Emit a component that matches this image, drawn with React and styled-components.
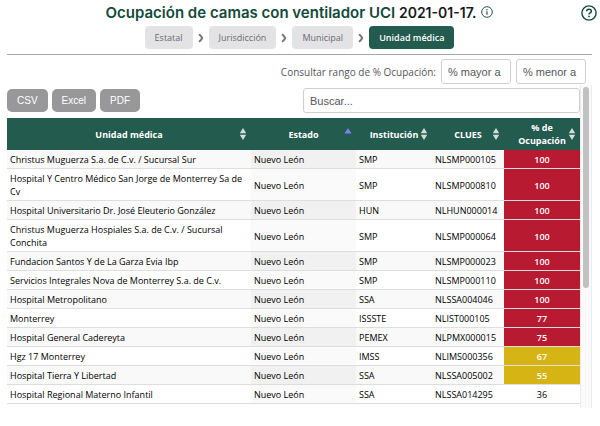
import React, { useState } from "react";
import styled, { createGlobalStyle } from "styled-components";

const Colours = {
  green: "#235b4e",
  darkgreen: "#12493b",
  red: "#b81a31",
  yellow: "#d6b414",
  gray: "#98989a",
  lightgray: "#e3e3e5",
  border: "#cfcfcf",
  text: "#55565a",
};

const GlobalStyle = createGlobalStyle`
  * {
    box-sizing: border-box;
  }
  body {
    margin: 0;
    background: #fff;
    font-family: "Open Sans", sans-serif;
    font-size: 9px;
    color: #000;
  }
`;

const PageContainer = styled.div`
  height: 100vh;
  padding: 0 8px 18px 7px;
  display: flex;
  flex-direction: column;
`;

const Header = styled.header`
  display: grid;
  grid-template-columns: 16px 1fr 16px;
  align-items: center;
  height: 26px;
  margin: 0 -5px;
  flex-shrink: 0;
`;

const Title = styled.h1`
  grid-column: 2;
  margin: 0;
  display: flex;
  justify-content: center;
  align-items: center;
  font-family: Inter, sans-serif;
  font-size: 15px;
  font-weight: 600;
  line-height: 24px;
  color: ${Colours.darkgreen};

  strong {
    font-size: 14px;
    font-weight: 600;
    color: #161a1d;
  }
`;

const IconButton = styled.button`
  display: flex;
  padding: 0;
  margin: ${(props) => props.$margin || "0"};
  border: none;
  background: none;
  color: ${Colours.darkgreen};
  cursor: pointer;
`;

const Breadcrumb = styled.nav`
  display: flex;
  justify-content: center;
  align-items: center;
  gap: 5px;
  padding-bottom: 5px;
  border-bottom: 1px solid #a6a6a6;
  flex-shrink: 0;
`;

const Crumb = styled.button`
  height: 23px;
  padding: 0 10px;
  border: none;
  border-radius: 4px;
  font-family: inherit;
  font-size: 9px;
  font-weight: ${(props) => (props.$active ? 600 : 400)};
  color: ${(props) => (props.$active ? "#fff" : "#6a6b6f")};
  background: ${(props) => (props.$active ? Colours.green : Colours.lightgray)};
  cursor: pointer;
`;

const RangeRow = styled.div`
  display: flex;
  justify-content: flex-end;
  align-items: center;
  gap: 5px;
  padding: 4px 6px 1px 0;
  flex-shrink: 0;
`;

const RangeLabel = styled.label`
  font-size: 10px;
  color: ${Colours.text};
`;

const TextInput = styled.input`
  width: ${(props) => props.$width};
  height: 25px;
  padding: 0 6px;
  border: 1px solid ${Colours.border};
  border-radius: 3px;
  font-family: "Liberation Sans", Arial, sans-serif;
  font-size: 11px;
  color: ${Colours.text};

  &::placeholder {
    color: ${Colours.text};
  }
`;

const Panel = styled.main`
  display: flex;
  flex: 1;
  min-height: 0;
`;

const PanelContent = styled.div`
  flex: 1;
  min-width: 0;
  overflow: hidden;
`;

const ScrollTrack = styled.div`
  width: 12px;
  padding: 2px;
  border-left: 1px solid #ececec;
  border-right: 1px solid #ececec;
  background: #fafafa;
`;

const ScrollThumb = styled.div`
  width: 6px;
  height: 63%;
  margin: 0 auto;
  border-radius: 3px;
  background: #c1c1c1;
`;

const Toolbar = styled.div`
  display: flex;
  justify-content: space-between;
  align-items: center;
  padding: 3px 0 5px;
`;

const ButtonContainer = styled.div`
  display: flex;
  gap: 4px;
`;

const ExportButton = styled.button`
  height: 23px;
  padding: 0 10px;
  border: none;
  border-radius: 5px;
  font-family: "Liberation Sans", Arial, sans-serif;
  font-size: 10px;
  color: #fff;
  background: ${Colours.gray};
  cursor: pointer;
`;

const Table = styled.table`
  width: 100%;
  table-layout: fixed;
  border-collapse: separate;
  border-spacing: 0;
  line-height: 13px;
`;

const HeadCell = styled.th`
  width: ${(props) => props.$width};
  height: 32px;
  padding: 0;
  color: #fff;
  background: ${Colours.green};
`;

const HeadContent = styled.div`
  display: flex;
  align-items: center;
  padding: 0 4px 0 12px;

  span {
    flex: 1;
    text-align: center;
  }
`;

const Row = styled.tr`
  background: ${(props) => (props.$odd ? "#f9f9f9" : "#fff")};
`;

const Cell = styled.td`
  padding: 3px 0 2px 3px;
  border-bottom: 1px solid #dedede;
  background: ${(props) => props.$sorted && (props.$odd ? "#f1f1f1" : "#fafafa")};
`;

const levelColour = (value) => {
  if (value >= 70) return Colours.red;
  if (value >= 50) return Colours.yellow;
  return "#fff";
};

const PercentCell = styled.td`
  padding: 3px 0 2px;
  border-bottom: 1px solid #dedede;
  text-align: center;
  font-weight: ${(props) => (props.$value >= 50 ? 600 : 400)};
  color: ${(props) => (props.$value >= 50 ? "#fff" : "#000")};
  background: ${(props) => levelColour(props.$value)};
  background-clip: padding-box;
`;

const Chevron = () => (
  <svg width="6" height="10" viewBox="0 0 6 10" fill="none" stroke="#77787b" strokeWidth="2">
    <path d="M1 1.2Q3 2.6 4.2 5Q3 7.4 1 8.8" />
  </svg>
);

const SortIcon = ({ sorted }) => (
  <svg width="8" height="14" viewBox="0 0 8 14">
    {sorted ? (
      <path d="M4 1l3.5 5.5h-7z" fill="#8080ee" />
    ) : (
      <path d="M4 1l3.2 5.2H.8zM4 13l3.2-5.2H.8z" fill="#d3dedb" />
    )}
  </svg>
);

const InfoIcon = () => (
  <svg width="12" height="12" viewBox="0 0 12 12" fill="none" stroke="currentColor">
    <circle cx="6" cy="6" r="5.3" strokeWidth="0.9" />
    <path d="M6 5.2v3.5M6 3v1.2" strokeWidth="1.1" />
  </svg>
);

const HelpIcon = () => (
  <svg width="16" height="16" viewBox="0 0 16 16" fill="none" stroke="currentColor">
    <circle cx="8" cy="8" r="7.1" strokeWidth="1.4" />
    <path d="M5.6 6.3C5.6 3.4 10.4 3.5 10.4 6.2C10.4 7.9 8 7.9 8 9.6" strokeWidth="1.5" />
    <path d="M8 10.7v1.6" strokeWidth="1.6" />
  </svg>
);

const levels = ["Estatal", "Jurisdicción", "Municipal", "Unidad médica"];

const columns = [
  { title: "Unidad médica" },
  { title: "Estado", width: "105px", sorted: true },
  { title: "Institución", width: "76px" },
  { title: "CLUES", width: "72px" },
  { title: "% de Ocupación", width: "76px" },
];

const units = [
  { name: "Christus Muguerza S.a. de C.v. / Sucursal Sur", institution: "SMP", clues: "NLSMP000105", value: 100 },
  { name: "Hospital Y Centro Médico San Jorge de Monterrey Sa de Cv", institution: "SMP", clues: "NLSMP000810", value: 100 },
  { name: "Hospital Universitario Dr. José Eleuterio González", institution: "HUN", clues: "NLHUN000014", value: 100 },
  { name: "Christus Muguerza Hospiales S.a. de C.v. / Sucursal Conchita", institution: "SMP", clues: "NLSMP000064", value: 100 },
  { name: "Fundacion Santos Y de La Garza Evia Ibp", institution: "SMP", clues: "NLSMP000023", value: 100 },
  { name: "Servicios Integrales Nova de Monterrey S.a. de C.v.", institution: "SMP", clues: "NLSMP000110", value: 100 },
  { name: "Hospital Metropolitano", institution: "SSA", clues: "NLSSA004046", value: 100 },
  { name: "Monterrey", institution: "ISSSTE", clues: "NLIST000105", value: 77 },
  { name: "Hospital General Cadereyta", institution: "PEMEX", clues: "NLPMX000015", value: 75 },
  { name: "Hgz 17 Monterrey", institution: "IMSS", clues: "NLIMS000356", value: 67 },
  { name: "Hospital Tierra Y Libertad", institution: "SSA", clues: "NLSSA005002", value: 55 },
  { name: "Hospital Regional Materno Infantil", institution: "SSA", clues: "NLSSA014295", value: 36 },
];

const App = () => {
  const [level, setLevel] = useState("Unidad médica");
  const [search, setSearch] = useState("");
  const [min, setMin] = useState("");
  const [max, setMax] = useState("");

  const filteredUnits = units.filter(
    (unit) =>
      unit.name.toLowerCase().includes(search.toLowerCase()) &&
      (min === "" || unit.value > Number(min)) &&
      (max === "" || unit.value < Number(max))
  );

  return (
    <PageContainer>
      <GlobalStyle />
      <Header>
        <Title>
          <span>
            Ocupación de camas con ventilador UCI <strong>2021-01-17.</strong>
          </span>
          <IconButton aria-label="Información" $margin="0 0 3px 5px">
            <InfoIcon />
          </IconButton>
        </Title>
        <IconButton aria-label="Ayuda">
          <HelpIcon />
        </IconButton>
      </Header>

      <Breadcrumb>
        {levels.map((name, index) => (
          <React.Fragment key={name}>
            {index > 0 && <Chevron />}
            <Crumb $active={name === level} onClick={() => setLevel(name)}>
              {name}
            </Crumb>
          </React.Fragment>
        ))}
      </Breadcrumb>

      <RangeRow>
        <RangeLabel htmlFor="min">Consultar rango de % Ocupación:</RangeLabel>
        <TextInput
          id="min"
          $width="70px"
          placeholder="% mayor a"
          value={min}
          onChange={(e) => setMin(e.target.value)}
        />
        <TextInput
          aria-label="% menor a"
          $width="70px"
          placeholder="% menor a"
          value={max}
          onChange={(e) => setMax(e.target.value)}
        />
      </RangeRow>

      <Panel>
        <PanelContent>
          <Toolbar>
            <ButtonContainer>
              <ExportButton>CSV</ExportButton>
              <ExportButton>Excel</ExportButton>
              <ExportButton>PDF</ExportButton>
            </ButtonContainer>
            <TextInput
              aria-label="Buscar"
              $width="277px"
              placeholder="Buscar..."
              value={search}
              onChange={(e) => setSearch(e.target.value)}
            />
          </Toolbar>

          <Table>
            <thead>
              <tr>
                {columns.map((column) => (
                  <HeadCell key={column.title} $width={column.width}>
                    <HeadContent>
                      <span>{column.title}</span>
                      <SortIcon sorted={column.sorted} />
                    </HeadContent>
                  </HeadCell>
                ))}
              </tr>
            </thead>
            <tbody>
              {filteredUnits.map((unit, index) => (
                <Row key={unit.clues} $odd={index % 2 === 0}>
                  <Cell>{unit.name}</Cell>
                  <Cell $sorted $odd={index % 2 === 0}>
                    Nuevo León
                  </Cell>
                  <Cell>{unit.institution}</Cell>
                  <Cell>{unit.clues}</Cell>
                  <PercentCell $value={unit.value}>{unit.value}</PercentCell>
                </Row>
              ))}
            </tbody>
          </Table>
        </PanelContent>
        <ScrollTrack>
          <ScrollThumb />
        </ScrollTrack>
      </Panel>
    </PageContainer>
  );
};

export default App;
